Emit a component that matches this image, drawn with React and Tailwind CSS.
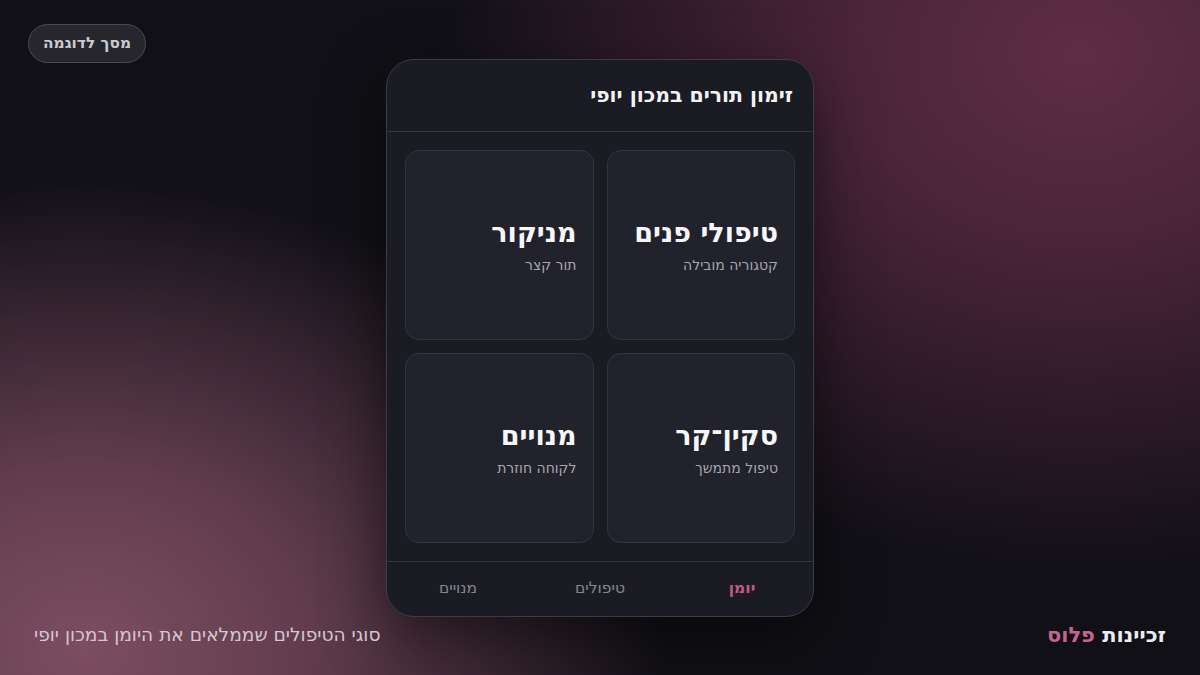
import React from 'react';

const services = [
  { title: 'טיפולי פנים', sub: 'קטגוריה מובילה' },
  { title: 'מניקור', sub: 'תור קצר' },
  { title: 'סקין־קר', sub: 'טיפול מתמשך' },
  { title: 'מנויים', sub: 'לקוחה חוזרת' },
];

const tabs = [
  { label: 'יומן', active: true },
  { label: 'טיפולים' },
  { label: 'מנויים' },
];

export default function App() {
  return (
    <div
      className="grid h-[675px] w-[1200px] overflow-hidden bg-[radial-gradient(ellipse_640px_520px_at_90%_8%,#5f2d46_0%,rgba(90,42,66,0.8)_35%,rgba(17,16,22,0)_100%),radial-gradient(ellipse_580px_470px_at_7%_96%,#7d4d62_0%,rgba(118,72,92,0.8)_38%,rgba(17,16,22,0)_100%),linear-gradient(#111016,#111016)] font-['DejaVu_Sans',sans-serif]"
      dir="ltr"
    >
      {/* demo chip */}
      <div className="col-start-1 row-start-1 self-start justify-self-start pl-7 pt-6">
        <button
          dir="rtl"
          className="h-[39px] rounded-full border border-[#4a4a52] bg-[#26262c] px-[14px] text-[15.4px] font-bold text-[#c9c9d1]"
        >
          מסך לדוגמה
        </button>
      </div>

      {/* phone card */}
      <div
        dir="rtl"
        className="col-start-1 row-start-1 self-center justify-self-center flex h-[558px] w-[428px] flex-col overflow-hidden rounded-[28px] border border-[#3b3c46] bg-[#1b1c23] shadow-[0_20px_60px_rgba(0,0,0,0.5)]"
      >
        <div className="flex h-[72px] shrink-0 items-center border-b border-[#33343d] px-5">
          <h1 className="text-[20.4px] font-bold text-[#f2f2f5]">זימון תורים במכון יופי</h1>
        </div>

        <div className="grid flex-1 grid-cols-2 gap-[13px] p-[18px]">
          {services.map((s) => (
            <div
              key={s.title}
              className="flex flex-col justify-center rounded-[14px] border border-[#33343e] bg-[#21222b] px-[16px]"
            >
              <div className="text-[27px] font-bold leading-[34px] text-[#f7f7fa]">{s.title}</div>
              <div className="mt-[6px] text-[14px] leading-[18px] text-[#a6a6b0]">{s.sub}</div>
            </div>
          ))}
        </div>

        <div className="grid h-[55px] shrink-0 grid-cols-3 items-center border-t border-[#33343d]">
          {tabs.map((t) => (
            <div
              key={t.label}
              className={
                t.active
                  ? 'text-center text-[15.5px] font-bold text-[#c25a82]'
                  : 'text-center text-[15.5px] text-[#85868f]'
              }
            >
              {t.label}
            </div>
          ))}
        </div>
      </div>

      {/* footer */}
      <div className="col-start-1 row-start-1 flex self-end items-center justify-between px-[34px] pb-[24px]">
        <div dir="rtl" className="text-[18.6px] text-[#d6c6ce]">
          סוגי הטיפולים שממלאים את היומן במכון יופי
        </div>
        <div dir="rtl" className="text-[21px] font-bold text-[#ececf0]">
          זכיינות <span className="text-[#c2668d]">פלוס</span>
        </div>
      </div>
    </div>
  );
}
